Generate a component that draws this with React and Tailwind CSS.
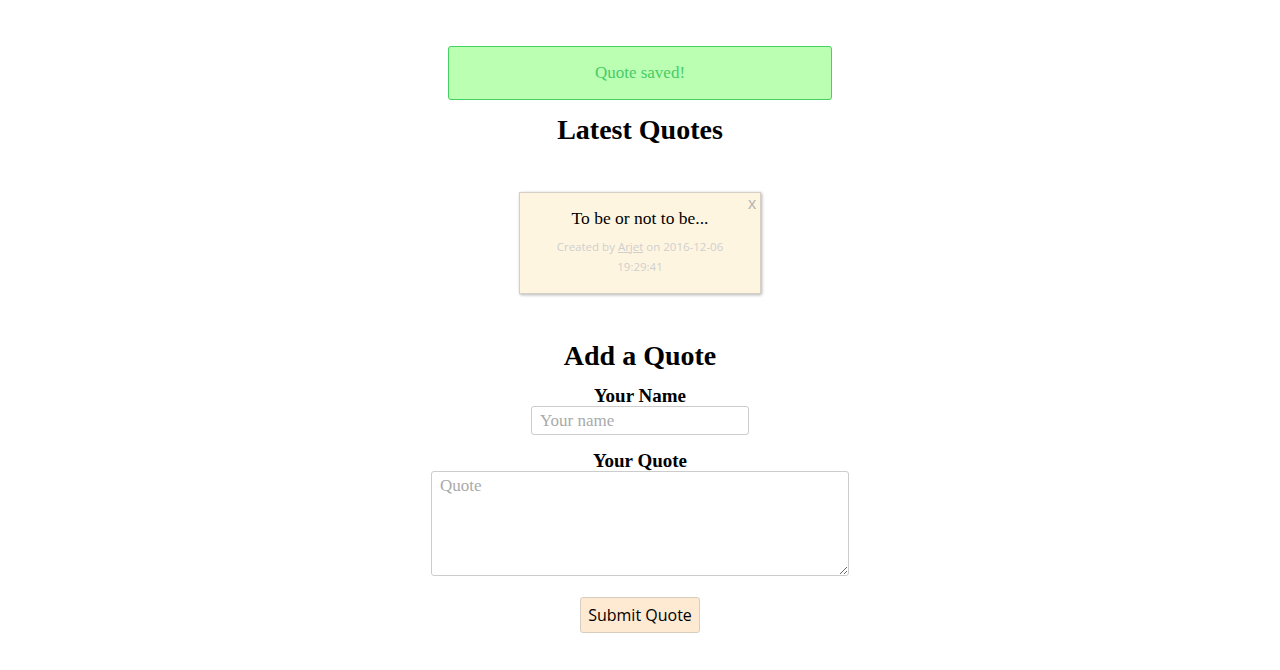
import React, { useState } from 'react';

const serif = "font-['Liberation_Serif',Georgia,serif]";
const sans = "font-['Open_Sans','Noto_Sans',sans-serif]";

// Single quote card
function QuoteCard({ quote }) {
  return (
    <div className="relative w-[242px] bg-[#fef5e0] border border-[#d4d0c6] shadow-[1px_1px_3px_rgba(0,0,0,0.3)] px-[18px] pt-[14px] pb-[16px] text-center">
      <span className={`absolute right-[4px] top-[3px] text-[13px] leading-[16px] font-semibold text-[#b8b8b8] ${sans}`}>X</span>
      <p className={`text-[17.5px] leading-[22px] text-black ${serif}`}>{quote.text}</p>
      <p className={`mt-[8px] text-[11.5px] leading-[20px] text-[#cfcfcf] ${sans}`}>
        Created by <a href="#" className="underline">{quote.author}</a> on {quote.date}
      </p>
    </div>
  );
}

export default function App() {
  const [name, setName] = useState('');
  const [text, setText] = useState('');
  const quotes = [{ text: 'To be or not to be...', author: 'Arjet', date: '2016-12-06 19:29:41' }];

  return (
    <div className={`min-h-[670px] bg-white flex flex-col items-center ${serif}`}>
      {/* Flash message */}
      <div className="mt-[46px] w-[384px] bg-[#bbffb3] border border-[#45d062] rounded-[3px] py-[15px] text-center text-[17px] leading-[22px] text-[#47cc68]">
        Quote saved!
      </div>

      <h2 className="mt-[15px] text-[28px] leading-[30px] font-bold text-black">Latest Quotes</h2>

      <div className="mt-[47px] flex flex-col items-center gap-4">
        {quotes.map((q, i) => (
          <QuoteCard key={i} quote={q} />
        ))}
      </div>

      <h2 className="mt-[47px] text-[28px] leading-[30px] font-bold text-black">Add a Quote</h2>

      <form className="flex flex-col items-center" onSubmit={(e) => e.preventDefault()}>
        <label className="mt-[15px] text-[19px] leading-[20px] font-bold text-black">Your Name</label>
        <input
          value={name}
          onChange={(e) => setName(e.target.value)}
          placeholder="Your name"
          className="w-[218px] h-[29px] border border-[#cccccc] rounded-[3px] px-[8px] text-[17px] placeholder:text-[#aaaaaa] outline-none"
        />
        <label className="mt-[16px] text-[19px] leading-[20px] font-bold text-black">Your Quote</label>
        <textarea
          value={text}
          onChange={(e) => setText(e.target.value)}
          placeholder="Quote"
          className="w-[418px] h-[105px] border border-[#cccccc] rounded-[3px] px-[8px] py-[3px] text-[17px] leading-[22px] placeholder:text-[#aaaaaa] outline-none"
        />
        <button
          type="submit"
          className={`mt-[21px] w-[120px] h-[36px] bg-[#feead3] border border-[#d8cdbf] rounded-[3px] text-[16px] text-black ${sans}`}
        >
          Submit Quote
        </button>
      </form>
    </div>
  );
}
